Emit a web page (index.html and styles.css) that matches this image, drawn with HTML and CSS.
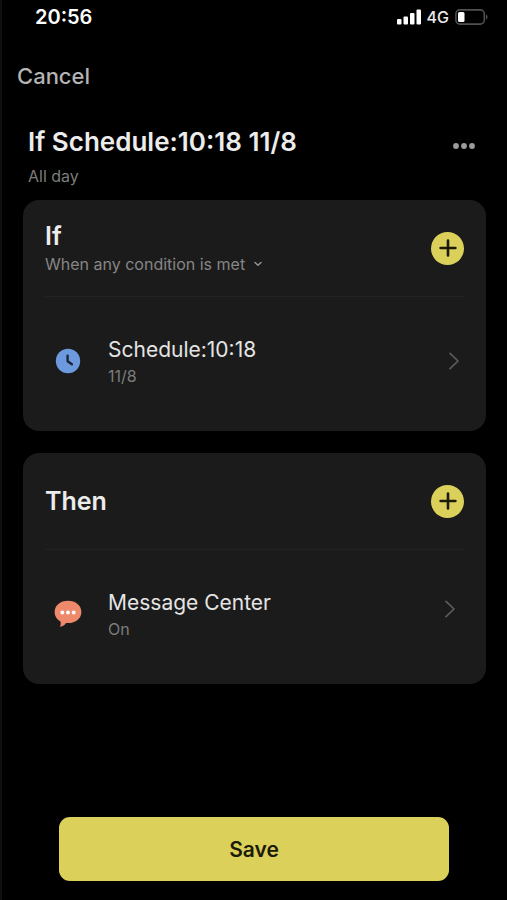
FILE: index.html
```html
<!DOCTYPE html>
<html lang="en">
<head>
<meta charset="utf-8">
<meta name="viewport" content="width=device-width, initial-scale=1">
<title>If Schedule:10:18 11/8</title>
<link rel="stylesheet" href="styles.css">
</head>
<body>
<div class="screen">
  <div class="status">
    <span class="time">20:56</span>
    <div class="indicators">
      <svg width="24" height="16" viewBox="0 0 24 16" fill="#fff" aria-hidden="true">
        <rect x="0" y="10" width="4.500" height="5.500" rx="1"/><rect x="6.500" y="7.500" width="4.500" height="8" rx="1"/><rect x="13" y="4" width="4.500" height="11.500" rx="1"/><rect x="19.500" y="0.500" width="4.500" height="15" rx="1"/>
      </svg>
      <span class="network">4G</span>
      <svg width="33" height="16" viewBox="0 0 33 16" aria-hidden="true">
        <rect x="0.900" y="0.900" width="28.400" height="14.200" rx="4" fill="none" stroke="#505050" stroke-width="1.600"/>
        <rect x="3" y="3" width="6.500" height="10" rx="1.500" fill="#fff"/>
        <path d="M31 5.500c2 .6 2 4.400 0 5z" fill="#505050"/>
      </svg>
    </div>
  </div>
  <nav class="nav"><button class="cancel" type="button">Cancel</button></nav>
  <main class="content">
    <header class="heading">
      <div class="heading-text">
        <h1>If Schedule:10:18 11/8</h1>
        <p class="sub">All day</p>
      </div>
      <button class="more" type="button" aria-label="More">
        <svg width="24" height="8" viewBox="0 0 24 8" fill="#9b9b9b"><circle cx="4" cy="4" r="2.900"/><circle cx="12" cy="4" r="2.900"/><circle cx="20" cy="4" r="2.900"/></svg>
      </button>
    </header>

    <section class="card">
      <div class="card-head">
        <div>
          <h2>If</h2>
          <div class="match">
            <select aria-label="Condition matching"><option>When any condition is met</option></select>
            <svg width="8" height="6" viewBox="0 0 8 6" fill="none" stroke="#929292" stroke-width="1.500" stroke-linecap="round" stroke-linejoin="round" aria-hidden="true"><path d="M1 1.500l3 2.800 3-2.800"/></svg>
          </div>
        </div>
        <button class="add" type="button" aria-label="Add condition">
          <svg width="18" height="18" viewBox="0 0 18 18" stroke="#1c1a08" stroke-width="2.600" stroke-linecap="round"><path d="M9 1.600v14.800M1.600 9h14.800"/></svg>
        </button>
      </div>
      <a class="row" href="#schedule">
        <svg class="icon" width="28" height="28" viewBox="0 0 28 28" aria-hidden="true">
          <circle cx="14" cy="14" r="12.200" fill="#6d99df"/>
          <path d="M13.600 8.600v5.700l4.300 3" fill="none" stroke="#1a2233" stroke-width="2.300" stroke-linecap="round" stroke-linejoin="round"/>
        </svg>
        <span class="row-text"><span class="name">Schedule:10:18</span><span class="sub">11/8</span></span>
        <svg class="chevron" width="10" height="18" viewBox="0 0 10 18" fill="none" stroke="#5c5c5c" stroke-width="1.700" stroke-linecap="round" stroke-linejoin="round" aria-hidden="true"><path d="M1 1.300L9 9l-8 7.700"/></svg>
      </a>
    </section>

    <section class="card">
      <div class="card-head">
        <h2>Then</h2>
        <button class="add" type="button" aria-label="Add action">
          <svg width="18" height="18" viewBox="0 0 18 18" stroke="#1c1a08" stroke-width="2.600" stroke-linecap="round"><path d="M9 1.600v14.800M1.600 9h14.800"/></svg>
        </button>
      </div>
      <a class="row row-action" href="#message-center">
        <svg class="icon" width="28" height="28" viewBox="0 0 28 28" aria-hidden="true">
          <path d="M14 .8C6.400.8.600 5.600.600 12c0 4.100 2.200 7.400 5.900 9.500.4 1.800.2 3.600-.4 5.500 2.700-.7 4.600-1.900 5.900-4 8.900.9 15.400-4.200 15.400-11C27.400 5.600 21.600.8 14 .8z" fill="#ee8a6b"/>
          <g fill="#fff"><circle cx="8.300" cy="12.500" r="1.900"/><circle cx="14" cy="12.500" r="1.900"/><circle cx="19.700" cy="12.500" r="1.900"/></g>
        </svg>
        <span class="row-text"><span class="name">Message Center</span><span class="sub">On</span></span>
        <svg class="chevron" width="10" height="18" viewBox="0 0 10 18" fill="none" stroke="#5c5c5c" stroke-width="1.700" stroke-linecap="round" stroke-linejoin="round" aria-hidden="true"><path d="M1 1.300L9 9l-8 7.700"/></svg>
      </a>
    </section>
  </main>
  <footer class="footer"><button class="save" type="button">Save</button></footer>
</div>
</body>
</html>
```
FILE: styles.css
```css
* { box-sizing: border-box; }
body {
  margin: 0;
  background: #000;
  color: #ececec;
  font-family: Inter, "Liberation Sans", sans-serif;
}
h1, h2, p { margin: 0; }
button, select {
  border: 0;
  padding: 0;
  background: none;
  color: inherit;
  font: inherit;
}
svg { display: block; flex: none; }

.screen {
  display: flex;
  flex-direction: column;
  min-height: 100vh;
  border-left: 2px solid #101010;
}
.status {
  display: flex;
  justify-content: space-between;
  align-items: center;
  height: 34px;
  padding: 0 19px 0 33px;
}
.time { font-size: 20px; font-weight: 600; color: #fff; }
.indicators { display: flex; align-items: center; gap: 6px; }
.network { font-size: 16px; font-weight: 500; line-height: 16px; }

.nav { padding: 28px 15px 0; }
.cancel {
  font-size: 22px;
  font-weight: 500;
  line-height: 28px;
  color: #b4b4b4;
}

.content { padding: 0 21px; }
.heading {
  display: flex;
  justify-content: space-between;
  align-items: flex-start;
  padding: 36px 10px 12px 5px;
}
h1 { font-size: 26px; font-weight: 600; line-height: 32px; }
.sub {
  font-size: 16px;
  line-height: 24px;
  color: #7c7c7c;
}
.heading .sub { margin-top: 6px; }
.more { padding: 16px 0 8px; }

.card {
  padding: 0 22px;
  border-radius: 16px;
  background: #1b1b1b;
}
.card + .card { margin-top: 22px; }
.card-head {
  display: flex;
  justify-content: space-between;
  align-items: center;
  height: 97px;
  border-bottom: 1px solid #222;
}
h2 { font-size: 25px; font-weight: 600; line-height: 32px; }
.match {
  display: flex;
  align-items: center;
  gap: 8px;
}
.match select {
  appearance: none;
  font-size: 16px;
  line-height: 24px;
  color: #868686;
}
.add {
  display: grid;
  place-items: center;
  flex: none;
  width: 33px;
  height: 33px;
  border-radius: 50%;
  background: #dbd15a;
}
.row {
  display: flex;
  align-items: center;
  min-height: 134px;
  padding: 0 5px 6px 9px;
  color: inherit;
  text-decoration: none;
}
.row-action { padding-right: 9px; }
.row-action .chevron { align-self: flex-start; margin-top: 50px; }
.row-text {
  display: flex;
  flex-direction: column;
  flex: 1;
  padding: 2px 0 0 26px;
}
.name { font-size: 21px; line-height: 28px; color: #e4e4e4; }

.footer { margin-top: auto; padding: 24px 58px 19px 57px; }
.save {
  width: 100%;
  height: 64px;
  border-radius: 11px;
  background: #dbd15a;
  color: #1c1a08;
  font-size: 21px;
  font-weight: 600;
}
```
